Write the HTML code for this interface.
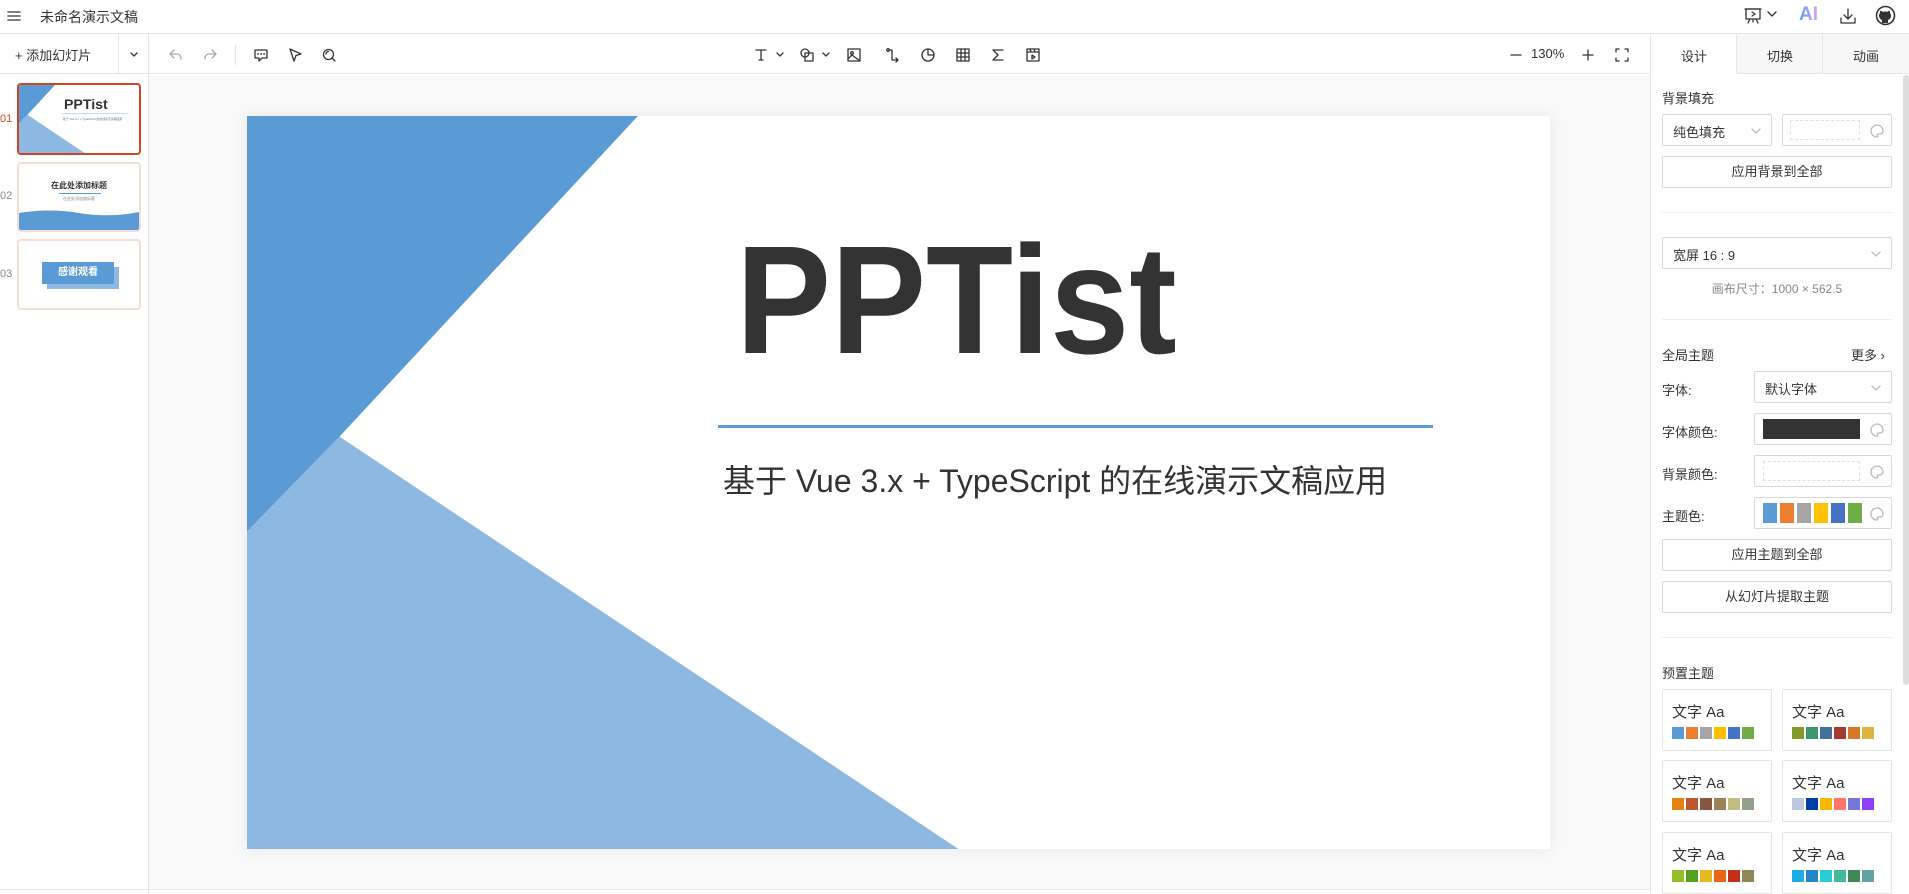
<!DOCTYPE html>
<html><head><meta charset="utf-8">
<style>
*{box-sizing:border-box;margin:0;padding:0}
body{width:1909px;height:894px;overflow:hidden;background:#fff;font-family:"Liberation Sans","Noto Sans CJK SC",sans-serif;color:#333;position:relative}
.abs{position:absolute}
.ic{position:absolute;fill:none;stroke:#333;stroke-width:1.3;stroke-linecap:round;stroke-linejoin:round}
.sel{position:absolute;border:1px solid #d9d9d9;border-radius:2px;background:#fff;font-size:13px}
.btn{position:absolute;border:1px solid #d9d9d9;border-radius:2px;background:#fff;font-size:13px;text-align:center;line-height:29px;color:#333}
.lbl{position:absolute;font-size:13px;color:#333}
.card{position:absolute;width:110px;height:62px;border:1px solid #e5e5e5;border-radius:2px;background:#fff}
.card .t{position:absolute;left:9px;top:11px;font-size:15px;color:#333}
.card .s{position:absolute;left:9px;top:37px;display:flex;gap:2px}
.card .s i{display:block;width:12px;height:12px}
</style></head><body>

<div class="abs" style="left:0;top:0;width:1909px;height:34px;border-bottom:1px solid #e5e5e5"></div>
<svg class="ic" style="left:6px;top:8px" width="16" height="16" viewBox="0 0 16 16"><path d="M2 4h12M2 8h12M2 12h12" stroke="#555" stroke-width="1.6"/></svg>
<div class="abs" style="left:40px;top:7px;font-size:14px;color:#333">未命名演示文稿</div>
<svg class="ic" style="left:1743px;top:6px" width="20" height="20" viewBox="0 0 20 20"><rect x="3" y="3" width="14" height="10"/><path d="M2 3h16M9 6l3 2-3 2M7 13l-2 4M13 13l2 4M10 13v3"/></svg>
<svg class="ic" style="left:1767px;top:10px" width="10" height="8" viewBox="0 0 10 8"><path d="M1 2l4 4 4-4"/></svg>
<div class="abs" style="left:1799px;top:4px;font-size:19px;font-weight:bold;background:linear-gradient(90deg,#5b9cf5,#d3a6f0);-webkit-background-clip:text;color:transparent">AI</div>
<svg class="ic" style="left:1838px;top:6px" width="20" height="20" viewBox="0 0 20 20"><path d="M10 3v10M6 9l4 4 4-4M3 12v5h14v-5"/></svg>
<svg style="position:absolute;left:1875px;top:5px" width="21" height="21" viewBox="0 0 21 21"><circle cx="10.5" cy="10.5" r="9" fill="none" stroke="#333" stroke-width="1.6"/><path d="M7 18v-3c-2-1-3-2-3-4.5 0-1 .4-2 1-2.5-.2-.8 0-1.7.3-2.2 1 0 2 .7 2.3 1 1.5-.4 3.4-.4 4.8 0 .4-.3 1.3-1 2.3-1 .3.5.5 1.4.3 2.2.6.5 1 1.5 1 2.5 0 2.5-1 3.5-3 4.5v3z" fill="#333"/></svg>

<div class="abs" style="left:0;top:34px;width:1650px;height:40px;border-bottom:1px solid #e5e5e5"></div>
<div class="abs" style="left:148px;top:34px;width:1px;height:860px;background:#e5e5e5"></div>
<div class="abs" style="left:118px;top:34px;width:1px;height:40px;background:#e5e5e5"></div>
<div class="abs" style="left:15px;top:45px;font-size:13px;color:#333">+ 添加幻灯片</div>
<svg class="ic" style="left:129px;top:51px" width="10" height="8" viewBox="0 0 10 8"><path d="M2 2l3 3 3-3"/></svg>
<svg class="ic" style="left:168px;top:47px;stroke:#aaa" width="16" height="16" viewBox="0 0 16 16"><path d="M6 3L2 7l4 4M2 7h7a4 4 0 014 4v1"/></svg>
<svg class="ic" style="left:202px;top:47px;stroke:#aaa" width="16" height="16" viewBox="0 0 16 16"><path d="M10 3l4 4-4 4M14 7H7a4 4 0 00-4 4v1"/></svg>
<div class="abs" style="left:235px;top:45px;width:1px;height:20px;background:#e5e5e5"></div>
<svg class="ic" style="left:253px;top:47px" width="16" height="16" viewBox="0 0 16 16"><path d="M2 3h12v8H9l-3 3v-3H2z"/><path d="M5 7h.1M8 7h.1M11 7h.1" stroke-width="1.8"/></svg>
<svg class="ic" style="left:287px;top:47px" width="16" height="16" viewBox="0 0 16 16"><path d="M3 2l11 5-5 1.5L7 14z"/></svg>
<svg class="ic" style="left:321px;top:47px" width="16" height="16" viewBox="0 0 16 16"><circle cx="7.5" cy="7.5" r="5"/><path d="M11 11l3 3M5 7a2.5 2.5 0 012.5-2.5"/></svg>

<svg class="ic" style="left:753px;top:47px" width="16" height="16" viewBox="0 0 16 16"><path d="M3 3h10M8 3v10M6 13h4"/></svg>
<svg class="ic" style="left:776px;top:51px" width="8" height="8" viewBox="0 0 8 8"><path d="M1 2l3 3 3-3"/></svg>
<svg class="ic" style="left:799px;top:47px" width="16" height="16" viewBox="0 0 16 16"><circle cx="6" cy="6" r="4"/><rect x="6" y="6" width="8" height="8"/></svg>
<svg class="ic" style="left:822px;top:51px" width="8" height="8" viewBox="0 0 8 8"><path d="M1 2l3 3 3-3"/></svg>
<svg class="ic" style="left:846px;top:47px" width="16" height="16" viewBox="0 0 16 16"><rect x="2" y="2" width="12" height="12"/><circle cx="6" cy="6" r="1.3"/><path d="M2 12l4-4 8 6"/></svg>
<svg class="ic" style="left:885px;top:47px" width="16" height="16" viewBox="0 0 16 16"><circle cx="3" cy="3" r="1.3"/><path d="M4 3h3v10h6M11 11l2 2-2 2"/></svg>
<svg class="ic" style="left:920px;top:47px" width="16" height="16" viewBox="0 0 16 16"><circle cx="8" cy="8" r="6"/><path d="M8 2v6h6"/></svg>
<svg class="ic" style="left:955px;top:47px" width="16" height="16" viewBox="0 0 16 16"><rect x="2" y="2" width="12" height="12"/><path d="M2 6h12M2 10h12M6 2v12M10 2v12"/></svg>
<svg class="ic" style="left:990px;top:47px" width="16" height="16" viewBox="0 0 16 16"><path d="M13 3H3l5 5-5 5h10"/></svg>
<svg class="ic" style="left:1025px;top:47px" width="16" height="16" viewBox="0 0 16 16"><rect x="2" y="2" width="12" height="12"/><path d="M2 5h12M5 2l1 3M9 2l1 3M7 8v4l3-2z"/></svg>

<svg class="ic" style="left:1509px;top:48px" width="14" height="14" viewBox="0 0 14 14"><path d="M2 7h10"/></svg>
<div class="abs" style="left:1531px;top:46px;font-size:13px;color:#333">130%</div>
<svg class="ic" style="left:1581px;top:48px" width="14" height="14" viewBox="0 0 14 14"><path d="M2 7h10M7 2v10"/></svg>
<svg class="ic" style="left:1615px;top:48px" width="14" height="14" viewBox="0 0 14 14"><path d="M1 4V1h3M10 1h3v3M13 10v3h-3M4 13H1v-3"/></svg>

<div class="abs" style="left:0;top:113px;font-size:11px;color:#d14424">01</div>
<div class="abs" style="left:0;top:190px;font-size:11px;color:#888">02</div>
<div class="abs" style="left:0;top:268px;font-size:11px;color:#888">03</div>
<div class="abs" style="left:17px;top:83px;width:124px;height:72px;border:2px solid #d14424;border-radius:4px;overflow:hidden;background:#fff">
<svg width="120" height="68" viewBox="0 0 1000 562.5" preserveAspectRatio="none"><polygon points="0,0 300,0 71,246 0,319" fill="#5b9bd5"/><polygon points="71,246 546,562.5 0,562.5 0,319" fill="#8db8e1"/><text x="375" y="197" font-family="Liberation Sans" font-weight="bold" font-size="118" fill="#333">PPTist</text><rect x="362" y="237" width="549" height="3" fill="#5b9bd5"/><text x="365" y="290" font-size="24" fill="#666" font-family="Liberation Sans,Noto Sans CJK SC">基于 Vue 3.x + TypeScript 的在线演示文稿应用</text></svg></div>
<div class="abs" style="left:17px;top:162px;width:124px;height:70px;border:2px solid #f7ddd7;border-radius:4px;overflow:hidden;background:#fff">
<div class="abs" style="left:0;top:16px;width:120px;text-align:center;font-size:8px;color:#333;font-weight:bold">在此处添加标题</div>
<div class="abs" style="left:40px;top:29px;width:42px;height:1px;background:#5b9bd5"></div>
<div class="abs" style="left:0;top:32px;width:120px;text-align:center;font-size:4px;color:#888">在此处添加副标题</div>
<svg class="abs" style="left:0;top:44px" width="120" height="22" viewBox="0 0 120 22"><path d="M0 5Q30 0 60 5T120 4V22H0z" fill="#5b9bd5"/></svg></div>
<div class="abs" style="left:17px;top:239px;width:124px;height:71px;border:2px solid #f7ddd7;border-radius:4px;overflow:hidden;background:#fff">
<div class="abs" style="left:28px;top:26px;width:72px;height:22px;background:#8db8e1"></div>
<div class="abs" style="left:23px;top:21px;width:72px;height:22px;background:#5b9bd5;color:#fff;font-size:10px;font-weight:bold;text-align:center;line-height:22px">感谢观看</div></div>

<div class="abs" style="left:149px;top:75px;width:1501px;height:814px;background:#f9f9f9"></div>
<div class="abs" style="left:0;top:889px;width:1650px;height:1px;background:#e5e5e5"></div>
<div class="abs" style="left:247px;top:116px;width:1303px;height:733px;box-shadow:0 0 15px rgba(0,0,0,.08);background:#fff;overflow:hidden">
<svg width="1303" height="733" viewBox="0 0 1000 562.5" preserveAspectRatio="none"><polygon points="0,0 300,0 71,246 0,319" fill="#5b9bd5"/><polygon points="71,246 546,562.5 0,562.5 0,319" fill="#8db8e1"/></svg>
<div class="abs" style="left:489px;top:107px;font-size:154px;font-weight:bold;color:#333;line-height:1;transform:scaleX(.925);transform-origin:left top;white-space:nowrap">PPTist</div>
<div class="abs" style="left:471px;top:309px;width:715px;height:3px;background:#5b9bd5"></div>
<div class="abs" style="left:476px;top:344px;font-size:32px;color:#333;white-space:nowrap;line-height:42px">基于 Vue 3.x + TypeScript 的在线演示文稿应用</div>
</div>

<div class="abs" style="left:1650px;top:34px;width:1px;height:860px;background:#e5e5e5"></div>
<div class="abs" style="left:1736px;top:34px;width:173px;height:40px;background:#f7f7f7;border-left:1px solid #e5e5e5;border-bottom:1px solid #e5e5e5"></div>
<div class="abs" style="left:1822px;top:34px;width:1px;height:40px;background:#e5e5e5"></div>
<div class="abs" style="left:1681px;top:46px;font-size:13px">设计</div>
<div class="abs" style="left:1767px;top:46px;font-size:13px">切换</div>
<div class="abs" style="left:1853px;top:46px;font-size:13px">动画</div>
<div class="abs" style="left:1903px;top:75px;width:6px;height:610px;background:#ddd;border-radius:3px"></div>

<div class="lbl" style="left:1662px;top:88px">背景填充</div>
<div class="sel" style="left:1662px;top:114px;width:110px;height:32px"><span style="position:absolute;left:10px;top:7px">纯色填充</span><svg class="ic" style="left:88px;top:12px;stroke:#bbb" width="10" height="8" viewBox="0 0 10 8"><path d="M1 2l4 4 4-4"/></svg></div>
<div class="sel" style="left:1782px;top:114px;width:110px;height:32px"><div class="abs" style="left:7px;top:5px;width:70px;height:20px;border:1px dashed #e0e0e0"></div><svg class="ic" style="left:87px;top:9px;stroke:#bbb" width="14" height="14" viewBox="0 0 14 14"><path d="M7 1a6 6 0 000 12c1 0 1-1 .5-1.5S7 10 8 10h2a3 3 0 003-3c0-3.5-3-6-6-6z"/></svg></div>
<div class="btn" style="left:1662px;top:156px;width:230px;height:32px">应用背景到全部</div>
<div class="abs" style="left:1662px;top:212px;width:230px;height:1px;background:#eee"></div>
<div class="sel" style="left:1662px;top:237px;width:230px;height:32px"><span style="position:absolute;left:10px;top:7px">宽屏 16 : 9</span><svg class="ic" style="left:208px;top:12px;stroke:#bbb" width="10" height="8" viewBox="0 0 10 8"><path d="M1 2l4 4 4-4"/></svg></div>
<div class="abs" style="left:1662px;top:280px;width:230px;text-align:center;font-size:12px;color:#888">画布尺寸：1000 × 562.5</div>
<div class="abs" style="left:1662px;top:319px;width:230px;height:1px;background:#eee"></div>

<div class="lbl" style="left:1662px;top:345px">全局主题</div>
<div class="lbl" style="left:1851px;top:345px">更多 ›</div>
<div class="lbl" style="left:1662px;top:380px">字体:</div>
<div class="sel" style="left:1754px;top:371px;width:138px;height:32px"><span style="position:absolute;left:10px;top:7px">默认字体</span><svg class="ic" style="left:116px;top:12px;stroke:#bbb" width="10" height="8" viewBox="0 0 10 8"><path d="M1 2l4 4 4-4"/></svg></div>
<div class="lbl" style="left:1662px;top:422px">字体颜色:</div>
<div class="sel" style="left:1754px;top:413px;width:138px;height:32px"><div class="abs" style="left:8px;top:5px;width:97px;height:20px;background:#333"></div><svg class="ic" style="left:115px;top:9px;stroke:#bbb" width="14" height="14" viewBox="0 0 14 14"><path d="M7 1a6 6 0 000 12c1 0 1-1 .5-1.5S7 10 8 10h2a3 3 0 003-3c0-3.5-3-6-6-6z"/></svg></div>
<div class="lbl" style="left:1662px;top:464px">背景颜色:</div>
<div class="sel" style="left:1754px;top:455px;width:138px;height:32px"><div class="abs" style="left:8px;top:5px;width:97px;height:20px;border:1px dashed #e0e0e0"></div><svg class="ic" style="left:115px;top:9px;stroke:#bbb" width="14" height="14" viewBox="0 0 14 14"><path d="M7 1a6 6 0 000 12c1 0 1-1 .5-1.5S7 10 8 10h2a3 3 0 003-3c0-3.5-3-6-6-6z"/></svg></div>
<div class="lbl" style="left:1662px;top:506px">主题色:</div>
<div class="sel" style="left:1754px;top:497px;width:138px;height:32px"><div class="abs" style="left:8px;top:5px;display:flex;gap:3px"><i style="width:14px;height:20px;background:#5b9bd5"></i><i style="width:14px;height:20px;background:#ed7d31"></i><i style="width:14px;height:20px;background:#a5a5a5"></i><i style="width:14px;height:20px;background:#ffc000"></i><i style="width:14px;height:20px;background:#4472c4"></i><i style="width:14px;height:20px;background:#70ad47"></i></div><svg class="ic" style="left:115px;top:9px;stroke:#bbb" width="14" height="14" viewBox="0 0 14 14"><path d="M7 1a6 6 0 000 12c1 0 1-1 .5-1.5S7 10 8 10h2a3 3 0 003-3c0-3.5-3-6-6-6z"/></svg></div>
<div class="btn" style="left:1662px;top:539px;width:230px;height:32px">应用主题到全部</div>
<div class="btn" style="left:1662px;top:581px;width:230px;height:32px">从幻灯片提取主题</div>
<div class="abs" style="left:1662px;top:637px;width:230px;height:1px;background:#eee"></div>
<div class="lbl" style="left:1662px;top:663px">预置主题</div>

<div class="card" style="left:1662px;top:689px"><div class="t">文字 Aa</div><div class="s"><i style="background:#5b9bd5"></i><i style="background:#ed7d31"></i><i style="background:#a5a5a5"></i><i style="background:#ffc000"></i><i style="background:#4472c4"></i><i style="background:#70ad47"></i></div></div>
<div class="card" style="left:1782px;top:689px"><div class="t">文字 Aa</div><div class="s"><i style="background:#83992a"></i><i style="background:#3c9770"></i><i style="background:#44709d"></i><i style="background:#a23b32"></i><i style="background:#d87728"></i><i style="background:#deb340"></i></div></div>
<div class="card" style="left:1662px;top:760px"><div class="t">文字 Aa</div><div class="s"><i style="background:#e48312"></i><i style="background:#bd582c"></i><i style="background:#865640"></i><i style="background:#9b8357"></i><i style="background:#c2bc80"></i><i style="background:#94a088"></i></div></div>
<div class="card" style="left:1782px;top:760px"><div class="t">文字 Aa</div><div class="s"><i style="background:#bdc8df"></i><i style="background:#003fa9"></i><i style="background:#f5ba00"></i><i style="background:#ff7567"></i><i style="background:#7676d9"></i><i style="background:#923ffc"></i></div></div>
<div class="card" style="left:1662px;top:832px"><div class="t">文字 Aa</div><div class="s"><i style="background:#90c225"></i><i style="background:#54a121"></i><i style="background:#e6b91e"></i><i style="background:#e86618"></i><i style="background:#c42f19"></i><i style="background:#918756"></i></div></div>
<div class="card" style="left:1782px;top:832px"><div class="t">文字 Aa</div><div class="s"><i style="background:#1cade4"></i><i style="background:#2683c6"></i><i style="background:#27ced7"></i><i style="background:#42ba97"></i><i style="background:#3e8853"></i><i style="background:#62a39f"></i></div></div>
</body></html>
